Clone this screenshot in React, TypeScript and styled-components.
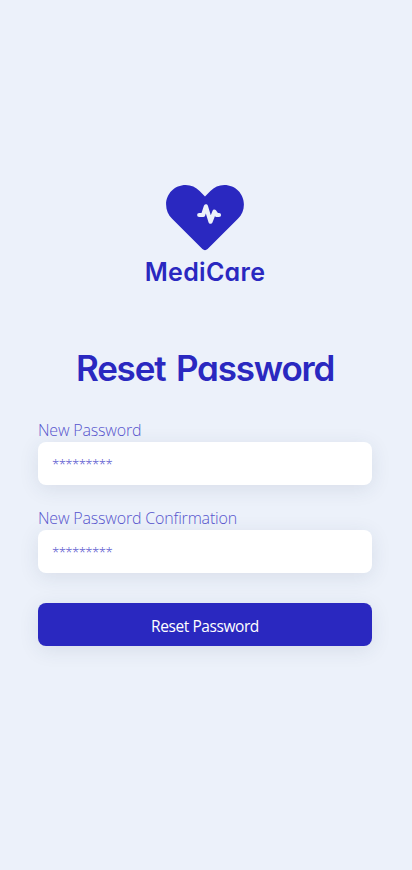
import React from "react";
import styled, { createGlobalStyle } from "styled-components";

const GlobalStyle = createGlobalStyle`
  * { box-sizing: border-box; }
  body { margin: 0; background: #ecf1fa; }
`;

const Page = styled.main`
  min-height: 870px;
  padding: 184px 40px 0 38px;
  display: flex;
  flex-direction: column;
  align-items: center;
  background: #ecf1fa;
  color: #2a28c0;
  font-family: "Open Sans", "Noto Sans", sans-serif;
`;

const Logo = styled.div`
  display: flex;
  flex-direction: column;
  align-items: center;
  height: 104px;
`;

const Heart = styled.svg`
  display: block;
  flex-shrink: 0;
  width: 78px;
  height: 67px;
`;

const BrandName = styled.span`
  margin-top: 5px;
  font: 600 25px/32px Inter, sans-serif;
  font-feature-settings: "cv11";
  letter-spacing: 0.3px;
  white-space: nowrap;
`;

const Title = styled.h1`
  margin: 57px 0 0;
  font: 600 35px/46px Inter, sans-serif;
  font-feature-settings: "cv11";
  letter-spacing: -1.2px;
  word-spacing: 3px;
  white-space: nowrap;
`;

const Form = styled.form`
  width: 100%;
  margin-top: 28px;
  display: flex;
  flex-direction: column;
`;

const Field = styled.label`
  display: flex;
  flex-direction: column;
  margin-bottom: 22px;
`;

const LabelText = styled.span`
  height: 23px;
  font-size: 16px;
  font-weight: 300;
  line-height: 23px;
  color: #5755ce;
  letter-spacing: -0.18px;
`;

const Input = styled.input`
  width: 100%;
  height: 43px;
  padding: 1px 14px 0;
  border: 0;
  border-radius: 8px;
  outline: 0;
  background: #fff;
  box-shadow: 0 4px 20px rgba(40, 55, 90, 0.1);
  font: 300 13.3px "Open Sans", sans-serif;
  letter-spacing: -0.65px;
  &::placeholder { color: #4d4bcb; opacity: 1; }
`;

const Submit = styled.button`
  height: 43px;
  margin-top: 8px;
  padding: 2px 0 0;
  border: 0;
  border-radius: 8px;
  background: #2a28c0;
  color: #fff;
  box-shadow: 0 4px 20px rgba(40, 55, 90, 0.1);
  font: 400 15.5px "Open Sans", sans-serif;
  letter-spacing: -0.43px;
`;

export default function App() {
  return (
    <>
      <GlobalStyle />
      <Page>
        <Logo>
          <Heart viewBox="0 0 78 67" aria-hidden="true">
            <path
              fill="#2a28c0"
              d="M39 12.400 33.600 7A19.800 19.800 0 0 0 19.700 1C8.600 1 .1 9.800.1 20.500c0 5.800 2 10.200 6 14.300L36.400 65c1.700 1.500 3.500 1.500 5.200 0l30.300-30.200c4-4.100 6-8.500 6-14.300C77.900 9.800 69.400 1 58.300 1a19.800 19.800 0 0 0-13.900 6Z"
            />
            <path
              fill="none"
              stroke="#ecf1fa"
              strokeWidth="4.2"
              strokeLinecap="round"
              strokeLinejoin="round"
              d="M33.200 31h3.900l2.800-8.700L44.500 37.700l3.900-10 2.400 3.300h2.200"
            />
          </Heart>
          <BrandName>MediCare</BrandName>
        </Logo>
        <Title>Reset Password</Title>
        <Form onSubmit={(e) => e.preventDefault()}>
          <Field>
            <LabelText>New Password</LabelText>
            <Input type="password" placeholder="*********" />
          </Field>
          <Field>
            <LabelText>New Password Confirmation</LabelText>
            <Input type="password" placeholder="*********" />
          </Field>
          <Submit type="submit">Reset Password</Submit>
        </Form>
      </Page>
    </>
  );
}
